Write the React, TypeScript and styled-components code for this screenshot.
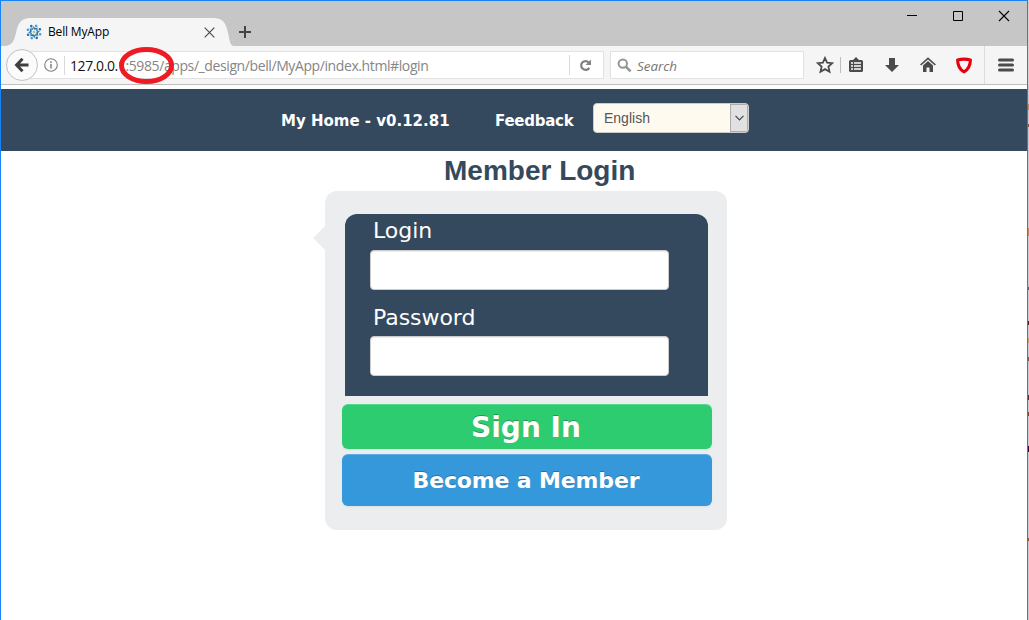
import React from "react";
import styled, { createGlobalStyle } from "styled-components";

const Global = createGlobalStyle`
  * { box-sizing: border-box; }
  body { margin: 0; background: #fff; overflow: hidden; }
`;

const ui = `"Open Sans", "Noto Sans", sans-serif`;
const verdana = `"DejaVu Sans", Verdana, sans-serif`;
const arial = `"Liberation Sans", Arial, sans-serif`;

const Desktop = styled.div`
  width: 1029px;
  height: 620px;
  display: flex;
  background: #c3cbd3;
  overflow: hidden;
`;
const Window = styled.div`
  width: 1028px;
  height: 620px;
  border: 1px solid #1883f7;
  border-bottom: 0;
  background: #fff;
  display: flex;
  flex-direction: column;
`;
const Edge = styled.div`
  width: 1px;
  height: 620px;
  flex: none;
  position: relative;
`;
const Fleck = styled.i<{ $y: number; $h: number; $c: string }>`
  position: absolute;
  left: 0;
  top: ${(p) => p.$y}px;
  width: 1px;
  height: ${(p) => p.$h}px;
  background: ${(p) => p.$c};
`;

const TabStrip = styled.div`
  height: 45px;
  flex: none;
  background: #c6c6c6;
  display: flex;
  align-items: flex-end;
`;
const Tab = styled.div`
  position: relative;
  width: 230px;
  height: 28px;
  margin-left: 3px;
  display: flex;
  align-items: center;
`;
const TabShape = styled.svg`
  position: absolute;
  left: 0;
  top: 0;
`;
const TabIcon = styled.svg`
  position: relative;
  margin-left: 22px;
`;
const TabTitle = styled.span`
  position: relative;
  font: 12px/16px ${ui};
  letter-spacing: -0.16px;
  color: #000;
  margin-left: 6px;
  width: 156px;
  white-space: nowrap;
`;
const TabClose = styled.svg`
  position: relative;
`;
const NewTab = styled.svg`
  margin: 0 0 7px 4px;
`;
const Controls = styled.div`
  margin-left: auto;
  align-self: flex-start;
  display: flex;
  gap: 34px;
  padding: 9px 17px 0 0;
`;

const NavBar = styled.div`
  height: 39px;
  flex: none;
  background: #f5f5f5;
  border-bottom: 1px solid #c0c0c0;
  display: flex;
  align-items: center;
`;
const BackButton = styled.div`
  width: 32px;
  height: 32px;
  margin-left: 5px;
  border: 1px solid #c2c2c2;
  border-radius: 50%;
  background: #fbfbfb;
  display: flex;
  align-items: center;
  justify-content: center;
  z-index: 1;
`;
const UrlBar = styled.div`
  position: relative;
  width: 576px;
  height: 28px;
  margin-left: -10px;
  padding-left: 15px;
  background: #fff;
  border: 1px solid #e2e2e2;
  display: flex;
  align-items: center;
`;
const Rule = styled.i<{ $h: number; $c?: string }>`
  width: 1px;
  height: ${(p) => p.$h}px;
  flex: none;
  background: ${(p) => p.$c || "#d9d9d9"};
`;
const Url = styled.span`
  flex: 1;
  margin-left: 5px;
  padding-top: 2px;
  font: 14px/20px ${ui};
  letter-spacing: -0.4px;
  color: #858585;
  white-space: nowrap;
`;
const Host = styled.span`
  color: #111;
`;
const Reload = styled.svg`
  margin: 0 11px 0 9px;
`;
const Circled = styled.svg`
  position: absolute;
  left: 90px;
  top: -6px;
`;
const Search = styled.div`
  width: 194px;
  height: 28px;
  margin-left: 6px;
  padding-left: 6px;
  background: #fff;
  border: 1px solid #e2e2e2;
  display: flex;
  align-items: center;
  gap: 5px;
  font: italic 13.4px/18px ${ui};
  color: #757575;
`;
const SearchHint = styled.span`
  padding-top: 2px;
`;
const Tools = styled.div`
  flex: 1;
  height: 100%;
  display: flex;
  align-items: center;
  padding-left: 12px;
`;
const Tool = styled.svg<{ $ml?: number }>`
  flex: none;
  margin-left: ${(p) => p.$ml || 0}px;
`;
const MenuBox = styled.div`
  height: 38px;
  border-left: 1px solid #dcdcdc;
  margin-left: 12px;
  padding-left: 13px;
  display: flex;
  align-items: center;
`;

const Page = styled.main`
  flex: 1;
  padding-top: 4px;
`;
const Header = styled.header`
  height: 62px;
  background: #34495e;
  display: flex;
  padding-left: 280px;
`;
const NavLink = styled.a<{ $w: number; $ls: number }>`
  width: ${(p) => p.$w}px;
  padding-top: 22px;
  font: bold 15px/20px ${verdana};
  letter-spacing: ${(p) => p.$ls}px;
  color: #fff;
  white-space: nowrap;
`;
const Select = styled.div`
  width: 156px;
  height: 30px;
  margin-top: 14px;
  border: 1px solid #ccc;
  border-radius: 4px;
  background: #fffaf0;
  display: flex;
  justify-content: space-between;
  padding-left: 10px;
  font: 14px/28px ${arial};
  color: #555;
  overflow: hidden;
`;
const SelectArrow = styled.div`
  width: 18px;
  height: 28px;
  border: 1px solid #adadad;
  background: #e1e1e1;
  display: flex;
  align-items: center;
  justify-content: center;
`;

const Title = styled.h1`
  margin: 0 0 0 443px;
  height: 40px;
  font: bold 28px/40px ${arial};
  color: #34495e;
  white-space: nowrap;
`;
const Card = styled.section`
  position: relative;
  width: 402px;
  height: 339px;
  margin-left: 324px;
  padding: 23px 15px 0 17px;
  border-radius: 12px;
  background: #ecedef;
`;
const Pointer = styled.svg`
  position: absolute;
  left: -12px;
  top: 35px;
`;
const Panel = styled.div`
  width: 363px;
  height: 182px;
  margin-left: 3px;
  padding-left: 25px;
  border-radius: 12px 12px 0 0;
  background: #34495e;
`;
const Label = styled.label<{ $h: number; $top: number }>`
  display: block;
  height: ${(p) => p.$h}px;
  padding: ${(p) => p.$top}px 0 0 3px;
  font: 22px/26px ${verdana};
  letter-spacing: -0.05px;
  color: #fff;
`;
const Input = styled.input`
  display: block;
  width: 299px;
  height: 40px;
  border: 1px solid #ccc;
  border-radius: 4px;
  background: #fff;
  box-shadow: inset 0 1px 1px rgba(0, 0, 0, 0.075);
  outline: 0;
`;
const Button = styled.button<{ $h: number; $size: number; $bg: string; $mt: number; $ls: number }>`
  display: block;
  width: 370px;
  height: ${(p) => p.$h}px;
  margin-top: ${(p) => p.$mt}px;
  padding: 2px 2px 0 0;
  border: 0;
  border-radius: 6px;
  background: ${(p) => p.$bg};
  box-shadow: inset 0 1px 0 rgba(255, 255, 255, 0.2), 0 1px 2px rgba(0, 0, 0, 0.05);
  font: bold ${(p) => p.$size}px/${(p) => p.$h - 2}px ${verdana};
  letter-spacing: ${(p) => p.$ls}px;
  color: #fff;
  text-shadow: 0 -1px 0 rgba(0, 0, 0, 0.25);
`;

const petals = [0, 45, 90, 135, 180, 225, 270, 315];

export default function App() {
  return (
    <>
      <Global />
      <Desktop>
        <Window>
          <TabStrip>
            <Tab>
              <TabShape width="230" height="28">
                <path d="M0 28C8 28 10 23 12 15C14 5 17 0 27 0H209C219 0 222 5 224 15C226 23 226 28 230 28Z" fill="#f5f5f5" />
              </TabShape>
              <TabIcon width="16" height="16" viewBox="0 0 16 16">
                {petals.map((a, i) => (
                  <g key={a} transform={`rotate(${a + 20} 8 8)`}>
                    <circle cx="8" cy="1.5" r="1.3" fill={i % 2 ? "#2b6cab" : "#4a9ad4"} />
                    <path d="M5.2 2.2Q7 5 10.2 2.8Q9.8 5 7.8 5.9Q5.6 5 5.2 2.2Z" fill={i % 2 ? "#3f8fca" : "#2b6cab"} />
                  </g>
                ))}
                <circle cx="8" cy="8" r="2.4" fill="#f5f5f5" />
                <circle cx="8" cy="8" r="1.4" fill="#9fcf6b" />
              </TabIcon>
              <TabTitle>Bell MyApp</TabTitle>
              <TabClose width="11" height="11" viewBox="0 0 11 11">
                <path d="M.7 .7L10.3 10.3M10.3 .7L.7 10.3" stroke="#4b4b4b" strokeWidth="1.2" />
              </TabClose>
            </Tab>
            <NewTab width="14" height="14" viewBox="0 0 14 14">
              <path d="M7 1V13M1 7H13" stroke="#444" strokeWidth="2" />
            </NewTab>
            <Controls>
              <svg width="12" height="12"><path d="M1 5.5H11" stroke="#000" /></svg>
              <svg width="12" height="12"><path d="M1.5 1.5H10.5V10.5H1.5Z" stroke="#000" fill="none" /></svg>
              <svg width="12" height="12"><path d="M1 1L11 11M11 1L1 11" stroke="#000" strokeWidth="1.1" /></svg>
            </Controls>
          </TabStrip>
          <NavBar>
            <BackButton>
              <svg width="16" height="16" viewBox="0 0 16 16">
                <path d="M8.5 1.8L2.6 8L8.5 14.2M3 8H14.5" stroke="#404040" strokeWidth="3" fill="none" />
              </svg>
            </BackButton>
            <UrlBar>
              <Tool width="14" height="14" viewBox="0 0 14 14">
                <circle cx="7" cy="7" r="6.3" fill="none" stroke="#808080" strokeWidth="1.1" />
                <path d="M7 6V10.5M7 3.3V4.9" stroke="#808080" strokeWidth="1.5" />
              </Tool>
              <Tool as="i" $ml={6} />
              <Rule $h={19} />
              <Url><Host>127.0.0.1</Host>:5985/apps/_design/bell/MyApp/index.html#login</Url>
              <Rule $h={20} />
              <Reload width="13" height="13" viewBox="0 0 13 13">
                <path d="M9.8 3.5A4.4 4.4 0 1 0 10.3 8.8" stroke="#808080" strokeWidth="2.2" fill="none" />
                <path d="M12 .6V6H6.6Z" fill="#808080" />
              </Reload>
              <Circled width="56" height="38" viewBox="0 0 56 38">
                <ellipse cx="27.5" cy="19.5" rx="25" ry="16" fill="none" stroke="#ed1c24" strokeWidth="5" />
              </Circled>
            </UrlBar>
            <Search>
              <svg width="15" height="15" viewBox="0 0 15 15">
                <circle cx="5.8" cy="5.6" r="4.2" fill="none" stroke="#959595" strokeWidth="2" />
                <path d="M8.8 8.6L13.6 13.4" stroke="#959595" strokeWidth="2.6" />
              </svg>
              <SearchHint>Search</SearchHint>
            </Search>
            <Tools>
              <Tool width="18" height="18" viewBox="0 0 18 18">
                <path d="M9 2L11.1 6.7L16.2 7.2L12.4 10.6L13.5 15.7L9 13.1L4.5 15.7L5.6 10.6L1.8 7.2L6.9 6.7Z" fill="none" stroke="#4b4b4b" strokeWidth="1.8" />
              </Tool>
              <Tool as="i" $ml={6} />
              <Rule $h={16} $c="#bdbdbd" />
              <Tool $ml={8} width="14" height="16" viewBox="0 0 14 16">
                <path d="M1.5 3H4L7 0L10 3H12.5Q14 3 14 4.5V13.5Q14 15 12.5 15H1.5Q0 15 0 13.5V4.5Q0 3 1.5 3Z" fill="#4b4b4b" />
                <path d="M2 6H4M2 9H4M2 12H4M5 6H12M5 9H12M5 12H12" stroke="#fff" strokeWidth="1.6" />
              </Tool>
              <Tool $ml={22} width="14" height="16" viewBox="0 0 14 16">
                <path d="M4 1H10V8H14L7 15L0 8H4Z" fill="#4b4b4b" />
              </Tool>
              <Tool $ml={21} width="16" height="16" viewBox="0 0 16 16">
                <path d="M.6 8L8 1.4L15.4 8" fill="none" stroke="#4b4b4b" strokeWidth="1.6" />
                <path d="M8 4L13 8.4V15H9.5V10.5H6.5V15H3V8.4Z" fill="#4b4b4b" />
              </Tool>
              <Tool $ml={20} width="16" height="17" viewBox="0 0 16 17">
                <path d="M1.6 2.9Q8 1.3 14.4 2.9Q14.3 11.2 8 14.8Q1.7 11.2 1.6 2.9Z" fill="none" stroke="#e6000f" strokeWidth="3.1" strokeLinejoin="round" />
              </Tool>
              <MenuBox>
                <svg width="16" height="14" viewBox="0 0 16 14">
                  <path d="M1.5 2H14.5M1.5 7H14.5M1.5 12H14.5" stroke="#4b4b4b" strokeWidth="3" strokeLinecap="round" />
                </svg>
              </MenuBox>
            </Tools>
          </NavBar>
          <Page>
            <Header>
              <NavLink $w={214} $ls={0}>My Home - v0.12.81</NavLink>
              <NavLink $w={98} $ls={-0.25}>Feedback</NavLink>
              <Select>
                English
                <SelectArrow>
                  <svg width="9" height="6" viewBox="0 0 9 6">
                    <path d="M.5 .8L4.5 4.8L8.5 .8" fill="none" stroke="#444" strokeWidth="1.2" />
                  </svg>
                </SelectArrow>
              </Select>
            </Header>
            <Title>Member Login</Title>
            <Card>
              <Pointer width="12" height="24"><path d="M12 0L0 12L12 24Z" fill="#ecedef" /></Pointer>
              <Panel>
                <Label $h={36} $top={4}>Login</Label>
                <Input />
                <Label $h={46} $top={15}>Password</Label>
                <Input type="password" />
              </Panel>
              <Button $h={45} $size={28} $bg="#2ecc71" $mt={8} $ls={0}>Sign In</Button>
              <Button $h={52} $size={22} $bg="#3498db" $mt={5} $ls={-0.15}>Become a Member</Button>
            </Card>
          </Page>
        </Window>
        <Edge>
          <Fleck $y={0} $h={85} $c="#d4d4d4" />
          <Fleck $y={104} $h={6} $c="#c58a5c" />
          <Fleck $y={124} $h={3} $c="#8a5044" />
          <Fleck $y={228} $h={8} $c="#c58a5c" />
          <Fleck $y={287} $h={3} $c="#5a6088" />
          <Fleck $y={321} $h={4} $c="#5a1020" />
          <Fleck $y={338} $h={5} $c="#c5a060" />
          <Fleck $y={357} $h={4} $c="#7a5a50" />
          <Fleck $y={395} $h={5} $c="#5a3040" />
          <Fleck $y={412} $h={4} $c="#8a4030" />
          <Fleck $y={446} $h={6} $c="#3a0048" />
          <Fleck $y={538} $h={3} $c="#8a5030" />
        </Edge>
      </Desktop>
    </>
  );
}
